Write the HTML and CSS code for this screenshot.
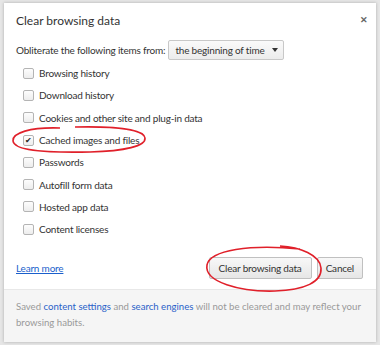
FILE: index.html
```html
<!DOCTYPE html>
<html lang="en">
<head>
  <meta charset="UTF-8">
  <title>Clear browsing data</title>
  <link rel="stylesheet" href="styles.css">
</head>
<body>
  <div class="dialog">
    <div class="dialog-main">
      <div class="title-row">
        <h1>Clear browsing data</h1>
        <span class="close">&#x2715;</span>
      </div>

      <div class="period-row">
        <span>Obliterate the following items from:</span>
        <div class="select">the beginning of time <span class="arrow"></span></div>
      </div>

      <ul class="items">
        <li><span class="box"></span>Browsing history</li>
        <li><span class="box"></span>Download history</li>
        <li><span class="box"></span>Cookies and other site and plug-in data</li>
        <li><span class="box checked">&#x2714;</span>Cached images and files</li>
        <li><span class="box"></span>Passwords</li>
        <li><span class="box"></span>Autofill form data</li>
        <li><span class="box"></span>Hosted app data</li>
        <li><span class="box"></span>Content licenses</li>
      </ul>

      <div class="actions">
        <a href="#" class="learn">Learn more</a>
        <div class="buttons">
          <button class="btn btn-clear">Clear browsing data</button>
          <button class="btn">Cancel</button>
        </div>
      </div>
    </div>

    <div class="dialog-footer">
      <span>Saved <a href="#">content settings</a> and <a href="#">search engines</a> will not be cleared and may reflect your</span><br>
      <span>browsing habits.</span>
    </div>

    <!-- red marker annotations -->
    <svg class="marks" width="380" height="345" viewBox="0 0 380 345">
      <path d="M60 128 C30 127 12 133 13 141 C14 150 40 153 90 152 C125 151 146 146 145 138 C144 130 120 126 75 127" fill="none" stroke="#e0202a" stroke-width="1.6"/>
      <path d="M300 249 C250 244 210 250 207 265 C204 282 240 292 275 291 C305 290 322 282 321 268 C320 255 300 247 280 246" fill="none" stroke="#e0202a" stroke-width="1.6"/>
    </svg>
  </div>
</body>
</html>
```

FILE: styles.css
```css
html, body {
  margin: 0;
  padding: 0;
}

body {
  background-color: #e6e6e6;
  font-family: Lato, 'Open Sans', sans-serif;
  font-size: 10px;
  letter-spacing: -0.2px;
  color: #333;
  width: 380px;
  height: 345px;
  overflow: hidden;
}

.dialog {
  position: relative;
  margin: 3px 4px 0 4px;
  width: 372px;
  height: 339px;
  background-color: #fff;
  box-shadow: 0 0 3px rgba(0, 0, 0, 0.25);
  display: flex;
  flex-direction: column;
}

.dialog-main {
  flex: 1;
  padding: 0 13px 0 12px;
  display: flex;
  flex-direction: column;
}

.title-row {
  display: flex;
  justify-content: space-between;
  align-items: flex-start;
  padding-top: 9px;
}

h1 {
  font-size: 12px;
  font-weight: normal;
  letter-spacing: 0;
  color: #333;
  margin: 0;
  line-height: 18px;
}

.close {
  font-size: 9px;
  color: #666;
  font-weight: bold;
  margin-top: 2px;
  margin-right: -5px;
}

.period-row {
  display: flex;
  align-items: center;
  gap: 3px;
  margin-top: 10px;
}

.select {
  height: 18px;
  line-height: 18px;
  padding: 0 5px 0 6px;
  border: 1px solid #c8c8c8;
  border-radius: 2px;
  background: linear-gradient(#fafafa, #ececec);
  display: flex;
  align-items: center;
  gap: 7px;
}

.arrow {
  width: 0;
  height: 0;
  border-left: 3.5px solid transparent;
  border-right: 3.5px solid transparent;
  border-top: 4px solid #333;
}

.items {
  list-style: none;
  margin: 2px 0 0 7px;
  padding: 0;
}

.items li {
  display: flex;
  align-items: center;
  height: 22.3px;
}

.box {
  width: 9px;
  height: 9px;
  border: 1px solid #b4b4b4;
  border-radius: 2px;
  background: linear-gradient(#fdfdfd, #ededed);
  margin-right: 5px;
  font-size: 8px;
  line-height: 9px;
  text-align: center;
  color: #222;
}

.actions {
  margin-top: auto;
  margin-bottom: 10px;
  display: flex;
  justify-content: space-between;
  align-items: center;
}

.learn {
  color: #1a5fcc;
  text-decoration: underline;
}

.buttons {
  display: flex;
  gap: 5px;
}

.btn {
  font-family: inherit;
  font-size: 10px;
  letter-spacing: -0.2px;
  color: #333;
  height: 22px;
  padding: 0 8px;
  border: 1px solid #c0c0c0;
  border-radius: 2px;
  background: linear-gradient(#f8f8f8, #e6e6e6);
}

.btn-clear {
  padding: 0 9px;
}

.dialog-footer {
  background-color: #f5f5f5;
  border-top: 1px solid #e8e8e8;
  color: #999;
  font-size: 9.6px;
  letter-spacing: 0;
  line-height: 16px;
  padding: 9px 14px 11px 12px;
  white-space: nowrap;
}

.dialog-footer a {
  color: #2a62c9;
  text-decoration: none;
}

.marks {
  position: absolute;
  top: -3px;
  left: -4px;
  pointer-events: none;
}
```
